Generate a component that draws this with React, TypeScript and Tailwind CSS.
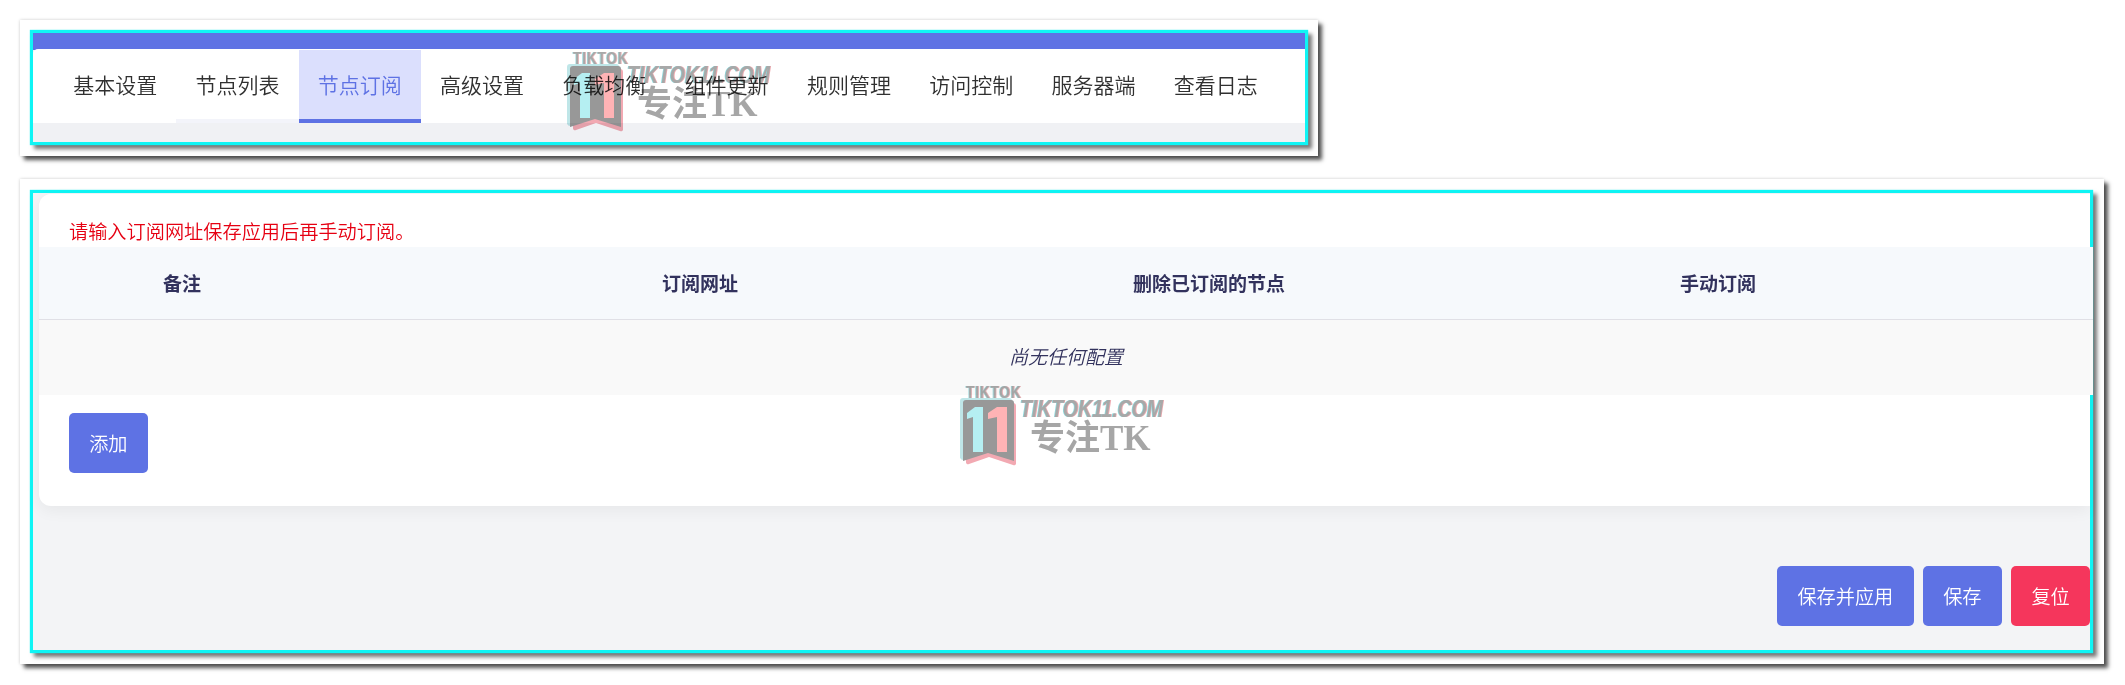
const FONT = "font-['Noto_Sans_CJK_SC','Noto_Sans',sans-serif]";

const TABS = ["基本设置", "节点列表", "节点订阅", "高级设置", "负载均衡", "组件更新", "规则管理", "访问控制", "服务器端", "查看日志"];

const COLUMNS = [
  { label: "备注", width: "w-[286px]" },
  { label: "订阅网址", width: "w-[750px]" },
  { label: "删除已订阅的节点", width: "w-[268px]" },
  { label: "手动订阅", width: "w-[750px]" },
];

function Watermark({ className }: { className: string }) {
  return (
    <div className={`absolute w-[205px] h-[80px] pointer-events-none mix-blend-multiply ${className}`}>
      <span className="absolute left-[6px] -top-[1px] origin-left scale-x-[0.85] text-[16px] leading-[15px] font-bold tracking-[1px] text-[#a8a8a8] font-['Liberation_Sans',sans-serif] [text-shadow:-1px_0_#a8dfe2,1px_0_#e8b4b8]">
        TIKTOK
      </span>
      <svg className="absolute left-0 top-[12px]" width="56" height="68" viewBox="0 0 56 68">
        <path d="M3 0h46a3 3 0 0 1 3 3v58l-26-7-24 8-2-2V3a3 3 0 0 1 3-3z" fill="#bfe6e8" />
        <path d="M6 5h47a3 3 0 0 1 3 3v57a2 2 0 0 1-3 2l-24-8-20 7a2 2 0 0 1-3-2z" fill="#f2a9b2" />
        <path d="M6 2h45a3 3 0 0 1 3 3v58l-26-8-25 8V5a3 3 0 0 1 3-3z" fill="#989898" />
        <path d="M7 15l8-6h8v45H13V19l-6 2z" fill="#b5eff2" />
        <path d="M28 15l9-6h10v45H37V19l-9 2z" fill="#ffb3b5" />
      </svg>
      <span className="absolute left-[60px] top-[11px] origin-left scale-x-[0.81] text-[24px] leading-[24px] font-bold italic text-[#a8a8a8] font-['Liberation_Sans',sans-serif] [text-shadow:-1px_0_#8fdde0,1px_0_#eeaab0]">
        TIKTOK11.COM
      </span>
      <span className="absolute left-[70px] top-[33px] text-[35px] leading-[40px] font-bold text-[#a6a6a6] font-['Liberation_Serif','Noto_Sans_CJK_SC',serif]">
        专注TK
      </span>
    </div>
  );
}

function PrimaryButton({ label, color = "bg-[#5e72e4]" }: { label: string; color?: string }) {
  return (
    <button className={`h-[60px] rounded-[5px] px-[20.2px] text-[19.2px] font-[350] text-white ${color}`}>
      {label}
    </button>
  );
}

export default function App() {
  return (
    <div className={`relative w-[2125px] h-[685px] overflow-hidden bg-white pt-[20px] pl-[20px] ${FONT}`}>
      {/* tab bar */}
      <section className="w-[1298px] h-[136px] bg-white p-[10px] shadow-[0_0_3px_rgba(0,0,0,0.2),4px_4px_4px_#555]">
        <div className="h-[115px] border-[3px] border-[#0ff5f5] shadow-[0_0_1px_#0ff5f5,4px_4px_4px_#777] bg-[#f0f1f4]">
          <div className="h-[17px] bg-[#5e72e4]" />
          <nav className="flex h-[74px] bg-white pl-[21px] rounded-tl-[5px] -mt-px pt-px">
            {TABS.map((tab, i) => (
              <a
                key={tab}
                className={`w-[122.3px] shrink-0 flex items-center justify-center text-[21px] font-[350] border-b-[4px] ${
                  i === 2
                    ? "bg-[#dbdffd] text-[#5e72e4] border-[#5e72e4]"
                    : i === 1
                      ? "text-[#303030] border-[#f3f4fa]"
                      : "text-[#303030] border-transparent"
                }`}
              >
                {tab}
              </a>
            ))}
          </nav>
        </div>
      </section>

      {/* subscription settings */}
      <section className="w-[2084px] h-[485px] mt-[23px] bg-white pt-[11px] pl-[10px] shadow-[0_0_3px_rgba(0,0,0,0.2),4px_4px_4px_#555]">
        <div className="w-[2063px] h-[463px] border-[3px] border-[#0ff5f5] shadow-[0_0_1px_#0ff5f5,4px_4px_4px_#777] bg-[#f3f4f6] pl-[6px] pt-px">
          <div className="w-[2051px] h-[312px] bg-white rounded-l-[12px] shadow-[0_5px_15px_rgba(0,0,0,0.05)]">
            <p className="h-[53px] pl-[30px] pt-[23px] text-[19.2px] leading-[28px] font-[350] text-[#e60012]">
              请输入订阅网址保存应用后再手动订阅。
            </p>
            <table className="w-full table-fixed border-collapse text-[#32325d]">
              <thead>
                <tr className="h-[72px] bg-[#f6f9fc] border-b border-[#e0e0e6]">
                  {COLUMNS.map((col) => (
                    <th key={col.label} className={`${col.width} text-[19px] font-bold text-center`}>
                      {col.label}
                    </th>
                  ))}
                </tr>
              </thead>
              <tbody>
                <tr className="h-[76px] bg-[#f9f9f9]">
                  <td colSpan={4} className="text-center text-[19px] font-[350] italic pb-[2px]">
                    尚无任何配置
                  </td>
                </tr>
              </tbody>
            </table>
            <div className="pl-[30px] pt-[18px]">
              <PrimaryButton label="添加" />
            </div>
          </div>
          <div className="flex justify-end gap-[9.5px] mt-[60px]">
            <PrimaryButton label="保存并应用" />
            <PrimaryButton label="保存" />
            <PrimaryButton label="复位" color="bg-[#f5365c]" />
          </div>
        </div>
      </section>

      <Watermark className="left-[567px] top-[52px]" />
      <Watermark className="left-[960px] top-[386px]" />
    </div>
  );
}
